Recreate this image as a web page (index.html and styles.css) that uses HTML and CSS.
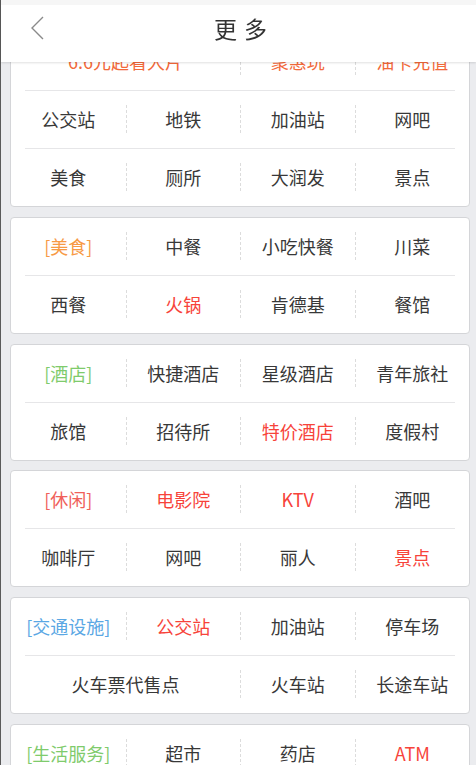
FILE: index.html
```html
<!DOCTYPE html>
<html lang="zh-CN">
<head>
  <meta charset="UTF-8">
  <title>更多</title>
  <meta name="viewport" content="width=device-width, initial-scale=1.0">
  <link rel="stylesheet" href="styles.css">
</head>
<body>
  <header class="topbar">
    <svg class="back" width="20" height="30" viewBox="0 0 20 30">
      <polyline points="13,3 2,14 13,25" fill="none" stroke="#8a8a8a" stroke-width="1.4"/>
    </svg>
    <h1>更多</h1>
  </header>

  <main class="list">
    <section class="card">
      <div class="row">
        <div class="cell span2 hot">6.6元起看大片</div>
        <div class="cell hot">聚惠玩</div>
        <div class="cell hot">油卡充值</div>
      </div>
      <div class="line"></div>
      <div class="row">
        <div class="cell">公交站</div>
        <div class="cell">地铁</div>
        <div class="cell">加油站</div>
        <div class="cell">网吧</div>
      </div>
      <div class="line"></div>
      <div class="row">
        <div class="cell">美食</div>
        <div class="cell">厕所</div>
        <div class="cell">大润发</div>
        <div class="cell">景点</div>
      </div>
    </section>

    <section class="card">
      <div class="row">
        <div class="cell tag orange">[美食]</div>
        <div class="cell">中餐</div>
        <div class="cell">小吃快餐</div>
        <div class="cell">川菜</div>
      </div>
      <div class="line"></div>
      <div class="row">
        <div class="cell">西餐</div>
        <div class="cell red">火锅</div>
        <div class="cell">肯德基</div>
        <div class="cell">餐馆</div>
      </div>
    </section>

    <section class="card">
      <div class="row">
        <div class="cell tag green">[酒店]</div>
        <div class="cell">快捷酒店</div>
        <div class="cell">星级酒店</div>
        <div class="cell">青年旅社</div>
      </div>
      <div class="line"></div>
      <div class="row">
        <div class="cell">旅馆</div>
        <div class="cell">招待所</div>
        <div class="cell red">特价酒店</div>
        <div class="cell">度假村</div>
      </div>
    </section>

    <section class="card">
      <div class="row">
        <div class="cell tag pink">[休闲]</div>
        <div class="cell red">电影院</div>
        <div class="cell red">KTV</div>
        <div class="cell">酒吧</div>
      </div>
      <div class="line"></div>
      <div class="row">
        <div class="cell">咖啡厅</div>
        <div class="cell">网吧</div>
        <div class="cell">丽人</div>
        <div class="cell red">景点</div>
      </div>
    </section>

    <section class="card">
      <div class="row">
        <div class="cell tag blue">[交通设施]</div>
        <div class="cell red">公交站</div>
        <div class="cell">加油站</div>
        <div class="cell">停车场</div>
      </div>
      <div class="line"></div>
      <div class="row">
        <div class="cell span2">火车票代售点</div>
        <div class="cell">火车站</div>
        <div class="cell">长途车站</div>
      </div>
    </section>

    <section class="card">
      <div class="row">
        <div class="cell tag green">[生活服务]</div>
        <div class="cell">超市</div>
        <div class="cell">药店</div>
        <div class="cell red">ATM</div>
      </div>
    </section>
  </main>
</body>
</html>
```

FILE: styles.css
```css
* {
  margin: 0;
  padding: 0;
  box-sizing: border-box;
}

body {
  font-family: "Noto Sans CJK SC", "Noto Sans", sans-serif;
  background-color: #ebecef;
  color: #383838;
  border-left: 1px solid #5a5a5a;
  height: 765px;
  overflow: hidden;
}

.topbar {
  position: fixed;
  top: 0;
  left: 1px;
  right: 0;
  height: 62px;
  background-color: #fff;
  border-top: 5px solid #f6f6f6;
  box-shadow: 0 1px 2px rgba(0, 0, 0, 0.12);
  z-index: 2;
}

.back {
  position: absolute;
  left: 29px;
  top: 9px;
}

.topbar h1 {
  text-align: center;
  font-size: 23px;
  font-weight: normal;
  letter-spacing: 7px;
  padding-left: 11px;
  line-height: 46px;
  color: #333;
}

.list {
  padding: 32px 6px 0 9px;
}

.card {
  background-color: #fff;
  border: 1px solid #d4d5d8;
  border-radius: 4px;
  margin-bottom: 9.75px;
}

.row {
  display: grid;
  grid-template-columns: repeat(4, 1fr);
  padding: 14px 0 15px;
}

.line {
  height: 1px;
  margin: 0 14px;
  background-color: #e6e6e8;
}

.cell {
  text-align: center;
  font-size: 18px;
  line-height: 28px;
  border-left: 1px dashed #dcdcdc;
}

.cell:first-child {
  border-left: none;
}

.span2 {
  grid-column: span 2;
}

.hot { color: #f2693a; }
.red { color: #f7433a; }
.orange { color: #f79a45; }
.green { color: #7fcb6c; }
.pink { color: #f0605a; }
.blue { color: #5aa7e4; }
```
